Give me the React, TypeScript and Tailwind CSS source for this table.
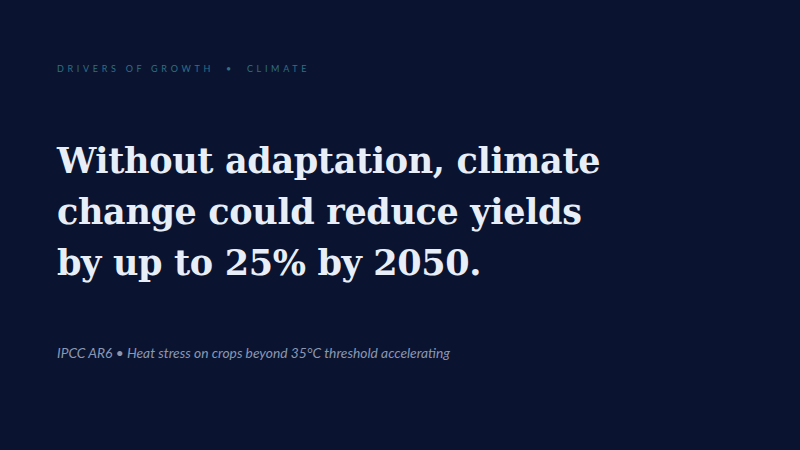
export default function App() {
  return (
    <div className="w-[800px] h-[450px] bg-[#0a1430] flex flex-col pl-[57px]">
      <div className="mt-[64px] text-[9px] tracking-[0.41em] text-[#2f6f86] leading-none font-['Lato',sans-serif]">
        DRIVERS OF GROWTH &nbsp;•&nbsp; CLIMATE
      </div>
      <h1 className="mt-[62px] text-[35px] leading-[51px] font-bold tracking-[-0.01em] text-[#e8eef8] font-['DejaVu_Serif',serif]">
        Without adaptation, climate
        <br />
        change could reduce yields
        <br />
        by up to 25% by 2050.
      </h1>
      <p className="mt-[55px] text-[13.8px] italic text-[#8a97b3] font-['Lato',sans-serif]">
        IPCC AR6 • Heat stress on crops beyond 35°C threshold accelerating
      </p>
    </div>
  );
}
